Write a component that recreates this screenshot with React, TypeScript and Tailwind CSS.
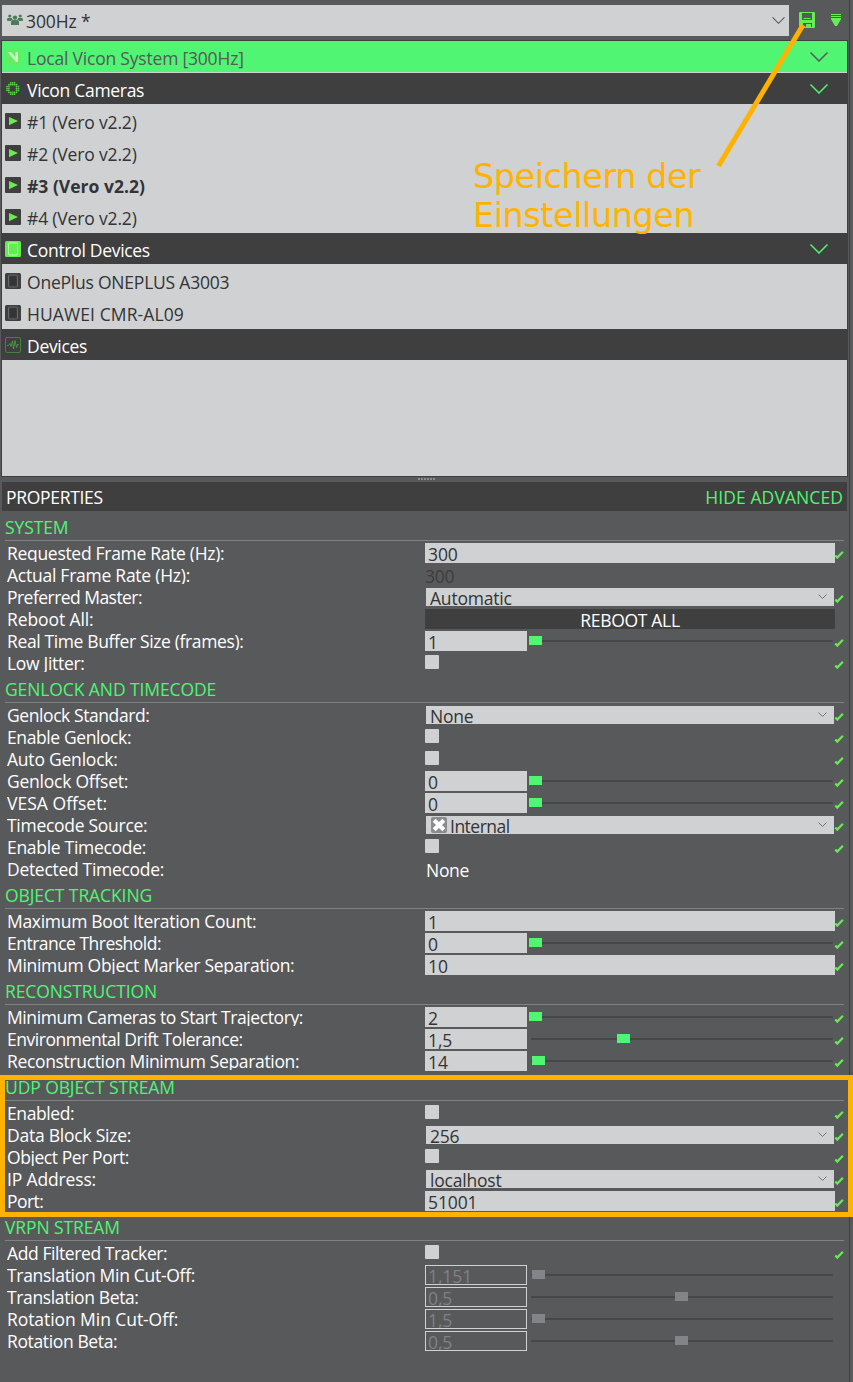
import type { ReactNode } from "react";

type Control =
  | { kind: "input"; value: string }
  | { kind: "readonly"; value: string; tone: string }
  | { kind: "select"; value: string; icon?: boolean }
  | { kind: "button"; value: string }
  | { kind: "slider"; value: string; pos: number; disabled?: boolean }
  | { kind: "check" };

type Property = { label: string; control: Control; ok?: boolean; tracking?: string };
type Group = { title: string; rows: Property[] };

const input = (value: string): Control => ({ kind: "input", value });
const select = (value: string, icon = false): Control => ({ kind: "select", value, icon });
const slider = (value: string, pos: number, disabled = false): Control => ({ kind: "slider", value, pos, disabled });
const check: Control = { kind: "check" };

const groups: Group[] = [
  {
    title: "SYSTEM",
    rows: [
      { label: "Requested Frame Rate (Hz):", control: input("300"), ok: true },
      { label: "Actual Frame Rate (Hz):", control: { kind: "readonly", value: "300", tone: "text-[#3d3d3d]" }, tracking: "tracking-[-0.25px]" },
      { label: "Preferred Master:", control: select("Automatic"), ok: true, tracking: "tracking-[-0.54px]" },
      { label: "Reboot All:", control: { kind: "button", value: "REBOOT ALL" }, tracking: "tracking-[-0.1px]" },
      { label: "Real Time Buffer Size (frames):", control: slider("1", 0), ok: true, tracking: "tracking-[-0.37px]" },
      { label: "Low Jitter:", control: check, ok: true },
    ],
  },
  {
    title: "GENLOCK AND TIMECODE",
    rows: [
      { label: "Genlock Standard:", control: select("None"), ok: true, tracking: "tracking-[-0.42px]" },
      { label: "Enable Genlock:", control: check, ok: true, tracking: "tracking-[-0.4px]" },
      { label: "Auto Genlock:", control: check, ok: true, tracking: "tracking-[-0.22px]" },
      { label: "Genlock Offset:", control: slider("0", 0), ok: true, tracking: "tracking-[-0.24px]" },
      { label: "VESA Offset:", control: slider("0", 0), ok: true, tracking: "tracking-[0.03px]" },
      { label: "Timecode Source:", control: select("Internal", true), ok: true, tracking: "tracking-[-0.28px]" },
      { label: "Enable Timecode:", control: check, ok: true },
      { label: "Detected Timecode:", control: { kind: "readonly", value: "None", tone: "text-white pl-px" } },
    ],
  },
  {
    title: "OBJECT TRACKING",
    rows: [
      { label: "Maximum Boot Iteration Count:", control: input("1"), ok: true },
      { label: "Entrance Threshold:", control: slider("0", 0), ok: true, tracking: "tracking-[-0.51px]" },
      { label: "Minimum Object Marker Separation:", control: input("10"), ok: true },
    ],
  },
  {
    title: "RECONSTRUCTION",
    rows: [
      { label: "Minimum Cameras to Start Trajectory:", control: slider("2", 0), ok: true, tracking: "tracking-[-0.41px]" },
      { label: "Environmental Drift Tolerance:", control: slider("1,5", 88), ok: true, tracking: "tracking-[-0.46px]" },
      { label: "Reconstruction Minimum Separation:", control: slider("14", 3), ok: true, tracking: "tracking-[-0.34px]" },
    ],
  },
  {
    title: "UDP OBJECT STREAM",
    rows: [
      { label: "Enabled:", control: check, ok: true, tracking: "tracking-[-0.4px]" },
      { label: "Data Block Size:", control: select("256"), ok: true, tracking: "tracking-[-0.24px]" },
      { label: "Object Per Port:", control: check, ok: true, tracking: "tracking-[-0.43px]" },
      { label: "IP Address:", control: select("localhost"), ok: true, tracking: "tracking-[-0.15px]" },
      { label: "Port:", control: input("51001"), ok: true, tracking: "tracking-[-0.55px]" },
    ],
  },
  {
    title: "VRPN STREAM",
    rows: [
      { label: "Add Filtered Tracker:", control: check, ok: true, tracking: "tracking-[-0.41px]" },
      { label: "Translation Min Cut-Off:", control: slider("1,151", 3, true) },
      { label: "Translation Beta:", control: slider("0,5", 146, true), tracking: "tracking-[-0.37px]" },
      { label: "Rotation Min Cut-Off:", control: slider("1,5", 3, true), tracking: "tracking-[-0.07px]" },
      { label: "Rotation Beta:", control: slider("0,5", 146, true), tracking: "tracking-[-0.37px]" },
    ],
  },
];

function Chevron({ className }: { className: string }) {
  return (
    <svg viewBox="0 0 18 10" className={className} fill="none" stroke="currentColor" strokeWidth="1.5">
      <path d="M0.5 0.5 L9 9 L17.5 0.5" />
    </svg>
  );
}

function SmallChevron() {
  return (
    <svg viewBox="0 0 9 6" className="mt-[6px] mr-[7px] h-1.5 w-[9px] text-[#727376]" fill="none" stroke="currentColor" strokeWidth="1">
      <path d="M0.5 0.500L4.500 4.500L8.500 0.500" />
    </svg>
  );
}

function PeopleIcon() {
  return (
    <svg viewBox="0 0 16 12" className="h-3 w-4 shrink-0 text-[#4a7c58]" fill="currentColor">
      <circle cx="8" cy="3.6" r="2.2" />
      <circle cx="2.8" cy="2" r="1.6" />
      <circle cx="13.2" cy="2" r="1.6" />
      <path d="M4 11V8.2Q4 6 6 6h4q2 0 2 2.2V11z" />
      <path d="M0 6.8V5.4Q0 4 1.5 4h3.2l1 1.8L3.8 7z" />
      <path d="M16 6.8V5.4Q16 4 14.500 4h-3.200l-1 1.800L12.200 7z" />
    </svg>
  );
}

function LogoIcon() {
  return (
    <svg viewBox="0 0 16 16" className="size-4">
      <rect width="16" height="16" fill="#63ee62" />
      <path d="M2.500 3H6L10.500 8.500V3H13V13H11z" fill="#c8fbc9" />
    </svg>
  );
}

function RingIcon() {
  const dots: ReactNode[] = [];
  for (let y = 0; y < 7; y++) {
    for (let x = 0; x < 7; x++) {
      const r = Math.hypot(x - 3, y - 3);
      if (r > 1.5 && r < 3.3) {
        dots.push(<circle key={`${x}-${y}`} cx={2 + x * 1.9} cy={1.8 + y * 1.9} r="0.85" />);
      }
    }
  }
  return (
    <svg viewBox="0 0 16 16" className="size-4" fill="#5fd651">
      {dots}
    </svg>
  );
}

function PlayIcon() {
  return (
    <svg viewBox="0 0 16 16" className="size-4">
      <rect width="16" height="16" rx="1" fill="#3f3f3f" />
      <path d="M4 4L13 8L4 12.300z" fill="#66ed50" />
    </svg>
  );
}

function TabletIcon({ active }: { active?: boolean }) {
  return (
    <svg viewBox="0 0 16 16" className="size-4">
      <rect width="16" height="16" rx="1.5" fill={active ? "#63ee50" : "#3f3f3f"} />
      <rect x="3.5" y="2" width="9" height="12" rx="1" fill="none" stroke={active ? "#c4f9bc" : "#66676a"} />
      <rect x="5" y="3.500" width="6" height="9" fill={active ? "#63ee50" : "#343435"} />
    </svg>
  );
}

function PulseIcon() {
  return (
    <svg viewBox="0 0 16 16" className="size-4" fill="none" stroke="#48803f">
      <rect x="0.5" y="0.5" width="15" height="15" rx="1.5" />
      <path d="M2 8.500H3.500L5 6.500L6 9.500L7.500 4L8.500 12L10 3.500L11.500 10.500L12.500 7.500H14" stroke="#55ad49" strokeWidth="0.7" />
    </svg>
  );
}

function SaveIcon() {
  return (
    <svg viewBox="0 0 16 16" className="size-4">
      <path fillRule="evenodd" fill="#66ed54" d="M1 0H15Q16 0 16 1V15Q16 16 15 16H2L0 14V1Q0 0 1 0zM3 1V8H13V1zM4 11V15H7V12H12V15H13V11z" />
      <path d="M4.500 6.500H11.500" stroke="#66ed54" />
    </svg>
  );
}

function MenuIcon() {
  return (
    <svg viewBox="0 0 10 12" className="h-3 w-2.5" fill="#66ed54">
      <path d="M0 0H10V1H0zM0 2H10V3H0zM0 4H10V5.200L6 12H4L0 5.200z" />
    </svg>
  );
}

function Tick() {
  return (
    <svg viewBox="0 0 8 8" className="mt-[9px] size-2 shrink-0 overflow-visible" fill="none" stroke="#63ed50" strokeWidth="2.2">
      <path d="M0.300 4.400L2.300 6.600L7.900 0.700" />
    </svg>
  );
}

function CrossBadge() {
  return (
    <svg viewBox="0 0 16 16" className="mt-px mr-[3px] ml-px size-4 shrink-0">
      <rect width="16" height="16" rx="2" fill="#8b8c8e" />
      <path d="M3.200 3.200L12.800 12.800M12.800 3.200L3.200 12.800" stroke="white" strokeWidth="4.200" />
    </svg>
  );
}

function TreeHeader({ icon, label, selected, expandable = true }: { icon: ReactNode; label: string; selected?: boolean; expandable?: boolean }) {
  return (
    <div className={`flex h-8 border-b border-[#d0d1d3] pl-[3px] ${selected ? "bg-[#4ff573] text-[#58595b]" : "bg-[#3f3f3f] text-white"}`}>
      <span className="mt-2 w-[22px]">{icon}</span>
      <span className={`flex-1 leading-[35px] ${selected ? "tracking-[-0.2px]" : ""}`}>{label}</span>
      {expandable && <Chevron className={`mt-[11px] mr-[19px] h-[10px] w-[18px] ${selected ? "text-[#58595b]" : "text-[#4ff573]"}`} />}
    </div>
  );
}

function TreeItem({ icon, label, tracking = "tracking-[-0.17px]" }: { icon: ReactNode; label: string; tracking?: string }) {
  return (
    <div className="flex h-8 pl-[3px] text-[#333435]">
      <span className="mt-2 w-[22px]">{icon}</span>
      <span className={`leading-[35px] ${tracking}`}>{label}</span>
    </div>
  );
}

function Field({ control }: { control: Control }) {
  switch (control.kind) {
    case "input":
      return <div className="mt-px h-5 w-[410px] overflow-hidden bg-[#d0d1d3] pl-[3px] leading-[22px] tracking-[-0.1px] text-[#333435]">{control.value}</div>;
    case "readonly":
      return <div className={`h-[22px] w-[410px] leading-[25px] ${control.tone}`}>{control.value}</div>;
    case "select":
      return (
        <div className="mx-px mt-0.5 flex h-[18px] w-[408px] overflow-hidden bg-[#d0d1d3] pl-1 text-[#333435]">
          {control.icon && <CrossBadge />}
          <span className={`flex-1 leading-[21px] ${control.icon ? "tracking-[-0.5px]" : "tracking-[-0.2px]"}`}>{control.value}</span>
          <SmallChevron />
        </div>
      );
    case "button":
      return <div className="mt-px h-5 w-[410px] overflow-hidden bg-[#3f3f3f] text-center leading-[22px] text-white">{control.value}</div>;
    case "slider":
      return (
        <div className="flex w-[410px]">
          <div
            className={`mt-px h-5 w-[102px] overflow-hidden tracking-[-0.1px] ${
              control.disabled ? "border border-[#d0d1d3] pl-[2px] leading-[21px] text-[#808184]" : "bg-[#d0d1d3] pl-[3px] leading-[22px] text-[#333435]"
            }`}
          >
            {control.value}
          </div>
          <div className="relative ml-[3px] h-[22px] w-[303px]">
            <div className="absolute top-[10px] right-0 left-px h-0.5 rounded bg-[#464748]" />
            <div
              className={`absolute top-1.5 h-[9px] w-[13px] ${control.disabled ? "bg-[#838487]" : "bg-[#4ff573]"}`}
              style={{ left: control.pos - 1 }}
            />
          </div>
        </div>
      );
    case "check":
      return <div className="mt-[3px] mr-[396px] size-[14px] rounded-[1px] bg-[#d0d1d3]" />;
  }
}

export default function App() {
  return (
    <div className="relative h-[1382px] w-[853px] overflow-hidden bg-[#58595b] font-['Open_Sans','Noto_Sans',sans-serif] text-[17.5px] tracking-[-0.3px] whitespace-nowrap">
      <div className="flex h-full">
        <div className="flex w-[849px] flex-col">
          <div className="flex h-10 pt-[5px] pl-0.5">
            <div className="flex h-[31px] w-[787px] bg-[#d0d1d3] pt-[9px] pl-[5px] text-[#333435]">
              <PeopleIcon />
              <span className="ml-[3px] flex-1 leading-[15px] tracking-[-0.1px]">300Hz *</span>
              <Chevron className="mt-[3px] mr-1 h-[7px] w-[13px] text-[#58595b]" />
            </div>
            <div className="mt-[7px] ml-[10px]"><SaveIcon /></div>
            <div className="mt-[9px] ml-4"><MenuIcon /></div>
          </div>

          <div className="mr-px ml-px h-[437px] border border-[#3f3f3f] bg-[#d0d1d3]">
            <TreeHeader icon={<LogoIcon />} label="Local Vicon System [300Hz]" selected />
            <TreeHeader icon={<RingIcon />} label="Vicon Cameras" />
            <TreeItem icon={<PlayIcon />} label="#1 (Vero v2.2)" />
            <TreeItem icon={<PlayIcon />} label="#2 (Vero v2.2)" />
            <TreeItem icon={<PlayIcon />} label="#3 (Vero v2.2)" tracking="font-bold tracking-[0.02px]" />
            <TreeItem icon={<PlayIcon />} label="#4 (Vero v2.2)" />
            <TreeHeader icon={<TabletIcon active />} label="Control Devices" />
            <TreeItem icon={<TabletIcon />} label="OnePlus ONEPLUS A3003" tracking="tracking-[-0.22px]" />
            <TreeItem icon={<TabletIcon />} label="HUAWEI CMR-AL09" tracking="tracking-[0.1px]" />
            <TreeHeader icon={<PulseIcon />} label="Devices" expandable={false} />
          </div>

          <div className="flex h-[5px] gap-px pt-px pl-[418px]">
            {[0, 1, 2, 3, 4, 5].map((i) => (
              <span key={i} className="size-0.5 bg-[#8c8d8f]" />
            ))}
          </div>

          <div className="mb-px ml-0.5 flex h-[29px] w-[845px] justify-between bg-[#3f3f3f] pr-1 pl-1 leading-[30px]">
            <span className="text-white">PROPERTIES</span>
            <span className="tracking-[0.08px] text-[#4ff573]">HIDE ADVANCED</span>
          </div>

          {groups.map((group) => (
            <section key={group.title} className="flex flex-col">
              <h2 className="mr-[5px] mb-px ml-[5px] h-[29px] border-b border-[#808184] leading-[31px] tracking-[-0.1px] text-[#4ff573]">{group.title}</h2>
              {group.rows.map((row) => (
                <div key={row.label} className="flex h-[22px] items-start pl-[7px]">
                  <span className={`h-5 w-[418px] overflow-hidden leading-[23px] text-white ${row.tracking ?? ""}`}>{row.label}</span>
                  <Field control={row.control} />
                  {row.ok && <Tick />}
                </div>
              ))}
            </section>
          ))}
        </div>
        <div className="w-px bg-[#3f3f3f]" />
      </div>

      <div className="absolute top-[157px] left-[473px] font-['DejaVu_Sans',sans-serif] text-[33.3px] leading-[39px] tracking-[-0.35px] text-[#ffb300]">
        Speichern der
        <br />
        Einstellungen
      </div>
      <svg className="absolute top-0 left-[700px]" width="120" height="180">
        <path d="M18.500 166L103 25" stroke="#ffb300" strokeWidth="5" />
      </svg>
      <div className="absolute top-[1075px] left-0 h-[142px] w-[853px] border-[5px] border-[#ffb300]" />
    </div>
  );
}
